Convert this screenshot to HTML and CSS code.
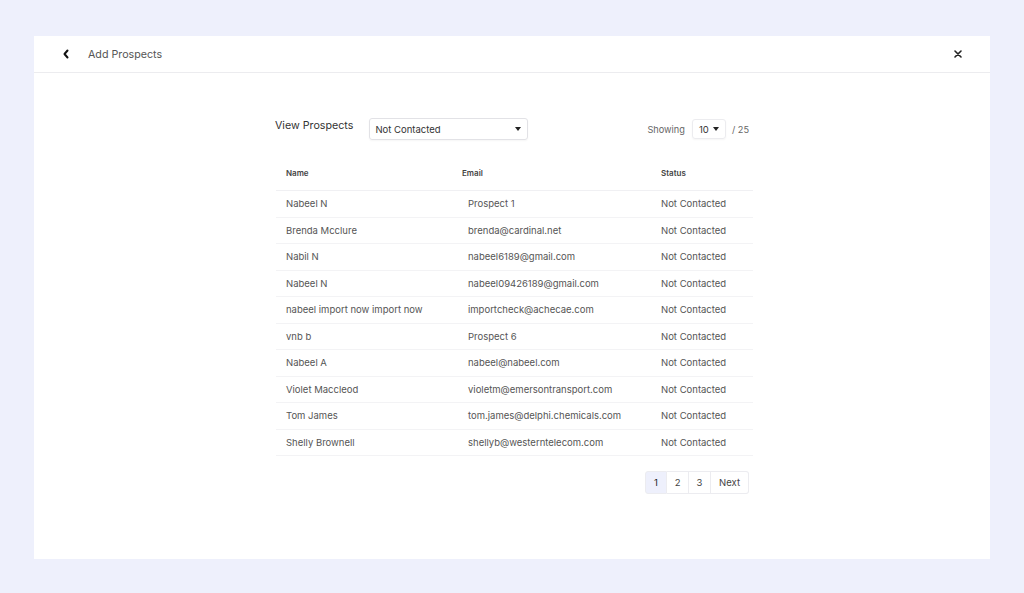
FILE: index.html
```html
<!DOCTYPE html>
<html lang="en">
<head>
  <meta charset="UTF-8" />
  <title>Add Prospects</title>
  <link rel="stylesheet" href="styles.css">
</head>
<body>

  <div class="modal">
    <div class="modal-header">
      <button class="icon-btn back-btn" aria-label="Back">
        <svg width="8" height="10" viewBox="0 0 8 10"><path d="M5.5 1.5 L2.5 5 L5.5 8.5" fill="none" stroke="#111" stroke-width="2" stroke-linecap="round" stroke-linejoin="round"/></svg>
      </button>
      <span class="modal-title">Add Prospects</span>
      <button class="icon-btn close-btn" aria-label="Close">
        <svg width="8" height="8" viewBox="0 0 8 8"><path d="M1 1 L7 7 M7 1 L1 7" fill="none" stroke="#222" stroke-width="1.6" stroke-linecap="round"/></svg>
      </button>
    </div>

    <div class="modal-body">
      <div class="toolbar">
        <div class="filter">
          <span class="filter-label">View Prospects</span>
          <div class="select select-wide">
            <span>Not Contacted</span>
            <span class="caret"></span>
          </div>
        </div>
        <div class="showing">
          <span>Showing</span>
          <div class="select select-small">
            <span>10</span>
            <span class="caret"></span>
          </div>
          <span>/ 25</span>
        </div>
      </div>

      <table class="prospects">
        <thead>
          <tr>
            <th class="col-name">Name</th>
            <th class="col-email">Email</th>
            <th class="col-status">Status</th>
          </tr>
        </thead>
        <tbody id="rows"></tbody>
      </table>

      <div class="pager">
        <button class="page active">1</button>
        <button class="page">2</button>
        <button class="page">3</button>
        <button class="page next">Next</button>
      </div>
    </div>
  </div>

  <script>
    const prospects = [
      ["Nabeel N", "Prospect 1"],
      ["Brenda Mcclure", "brenda@cardinal.net"],
      ["Nabil N", "nabeel6189@gmail.com"],
      ["Nabeel N", "nabeel09426189@gmail.com"],
      ["nabeel import now import now", "importcheck@achecae.com"],
      ["vnb b", "Prospect 6"],
      ["Nabeel A", "nabeel@nabeel.com"],
      ["Violet Maccleod", "violetm@emersontransport.com"],
      ["Tom James", "tom.james@delphi.chemicals.com"],
      ["Shelly Brownell", "shellyb@westerntelecom.com"]
    ];

    const tbody = document.getElementById("rows");
    prospects.forEach(([name, email]) => {
      const tr = document.createElement("tr");
      tr.innerHTML = `<td>${name}</td><td class="email">${email}</td><td>Not Contacted</td>`;
      tbody.appendChild(tr);
    });
  </script>

</body>
</html>
```

FILE: styles.css
```css
body {
  margin: 0;
  background-color: #eef0fc;
  font-family: Inter, "Liberation Sans", sans-serif;
  color: #555;
}

.modal {
  margin: 36px 34px 0;
  height: 523px;
  background-color: #fff;
}

.modal-header {
  height: 36px;
  display: flex;
  align-items: center;
  padding: 0 28px;
  border-bottom: 1px solid #ececef;
}

.icon-btn {
  border: none;
  background: none;
  padding: 0;
  display: flex;
  align-items: center;
  cursor: pointer;
}

.modal-title {
  margin-left: 18px;
  font-size: 10.7px;
  color: #555;
}

.close-btn {
  margin-left: auto;
  margin-right: 0;
}

.modal-body {
  width: 478px;
  margin: 0 auto;
  padding-top: 45px;
  position: relative;
  left: 2px;
}

.toolbar {
  display: flex;
  justify-content: space-between;
  align-items: center;
}

.filter,
.showing {
  display: flex;
  align-items: center;
}

.filter-label {
  font-size: 10.7px;
  color: #333;
  margin-top: -7px;
  margin-right: 16px;
}

.select {
  height: 20px;
  border: 1px solid #e2e2e6;
  border-radius: 3px;
  display: flex;
  align-items: center;
  justify-content: space-between;
  box-sizing: border-box;
  padding: 0 6px;
  font-size: 9.5px;
  color: #333;
  box-shadow: 0 1px 2px rgba(0,0,0,0.04);
}

.select-wide {
  width: 159px;
  height: 22px;
  padding-left: 5px;
}

.select-small {
  width: 34px;
  margin: 0 6px 0 7px;
  border-color: #ececef;
}

.caret {
  width: 0;
  height: 0;
  border-left: 3.5px solid transparent;
  border-right: 3.5px solid transparent;
  border-top: 4px solid #222;
}

.showing {
  font-size: 9.2px;
  color: #666;
  margin-right: 4px;
}

.prospects {
  width: 477px;
  margin-top: 15px;
  margin-left: 1px;
  border-collapse: collapse;
  font-size: 9.5px;
}

.prospects th {
  text-align: left;
  font-size: 8px;
  font-weight: 600;
  color: #444;
  height: 35px;
  padding: 0 10px;
  border-bottom: 1px solid #f0f0f3;
}

.col-name { width: 156px; }
.col-email { width: 179px; }

.prospects td {
  height: 25.5px;
  padding: 0 10px;
  color: #555;
  border-bottom: 1px solid #f3f3f5;
}

.prospects td.email {
  padding-left: 16px;
}

.pager {
  display: flex;
  justify-content: flex-end;
  margin-top: 15px;
  margin-right: 4px;
}

.page {
  height: 23px;
  min-width: 22px;
  border: 1px solid #ececf0;
  border-left: none;
  background-color: #fff;
  font-family: inherit;
  font-size: 9.5px;
  color: #444;
  padding: 0 6px;
  cursor: pointer;
}

.page:first-child {
  border-left: 1px solid #ececf0;
  border-radius: 3px 0 0 3px;
}

.page.next {
  border-radius: 0 3px 3px 0;
  padding: 0 8px;
}

.page.active {
  background-color: #eef0fc;
  color: #222;
}
```
